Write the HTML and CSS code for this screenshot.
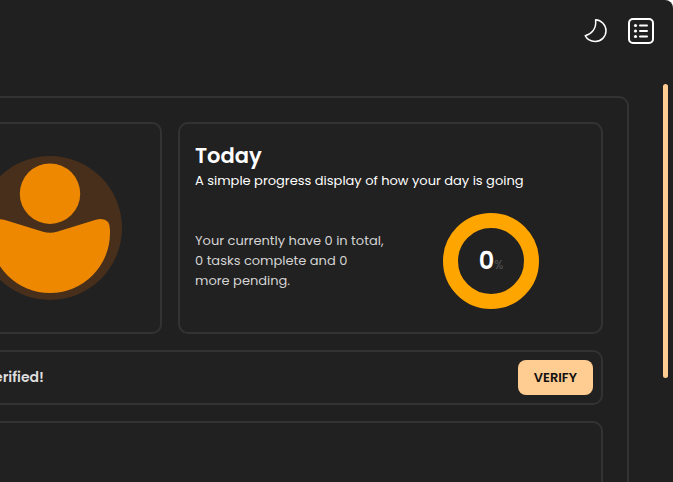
FILE: index.html
```html
<!DOCTYPE html>
<html lang="en">
<head>
    <meta charset="UTF-8">
    <meta name="viewport" content="width=device-width, initial-scale=1.0">
    <title>Dashboard</title>
    <link rel="stylesheet" href="styles.css">
</head>
<body>
    <div class="app">
        <header class="topbar">
            <button class="icon-btn" aria-label="Toggle theme">
                <svg width="26" height="26" viewBox="0 0 26 26" fill="none" stroke="#fff" stroke-width="1.5" stroke-linejoin="round">
                    <path d="M13.6 1.8C19.4 2.2 24 6.8 24 12.8C24 18.8 19.2 23.4 13.2 23.4C8.6 23.4 4.9 21.1 3.2 17.7C9.9 16 14.6 10.5 13.6 1.8Z"/>
                </svg>
            </button>
            <button class="icon-btn" aria-label="Open menu">
                <svg width="26" height="26" viewBox="0 0 26 26" fill="none" stroke="#fff" stroke-width="2" stroke-linecap="round">
                    <rect x="1" y="1" width="24" height="24" rx="4"/>
                    <path d="M12 7.5h7M12 13h7M12 18.5h7"/>
                    <g fill="#fff" stroke="none">
                        <circle cx="7.5" cy="7.5" r="1.6"/>
                        <circle cx="7.5" cy="13" r="1.6"/>
                        <circle cx="7.5" cy="18.5" r="1.6"/>
                    </g>
                </svg>
            </button>
        </header>

        <div class="content">
            <main class="panel">
                <div class="cards">
                    <section class="card profile">
                        <svg width="122" height="144" viewBox="22 0 122 144" role="img" aria-label="Profile picture">
                            <circle cx="72" cy="72" r="72" fill="#482f1b"/>
                            <circle cx="72" cy="37.7" r="30.2" fill="#ee8800"/>
                            <path fill="#ee8800" d="M65 75.8L27 64Q12 60 12 74V77A60 60 0 0 0 132 77V74Q132 60 117 64L79 75.8Q72 77.7 65 75.8Z"/>
                        </svg>
                    </section>

                    <section class="card today">
                        <h2>Today</h2>
                        <p class="subtitle">A simple progress display of how your day is going</p>
                        <div class="progress">
                            <p class="summary">Your currently have 0 in total,<br>0 tasks complete and 0<br>more pending.</p>
                            <div class="ring">
                                <span class="value">0</span><span class="percent">%</span>
                            </div>
                        </div>
                    </section>
                </div>

                <section class="card notice">
                    <p class="notice-text">erified!</p>
                    <button class="verify-btn">VERIFY</button>
                </section>

                <section class="card tasks"></section>
            </main>
            <div class="scroll-thumb"></div>
        </div>
    </div>
</body>
</html>
```
FILE: styles.css
```css
* {
    margin: 0;
    padding: 0;
    box-sizing: border-box;
    font-family: Poppins, Inter, sans-serif;
}

html {
    background-color: #ffffff;
}

body {
    height: 100vh;
    overflow: hidden;
}

.app {
    display: flex;
    flex-direction: column;
    height: 100vh;
    background-color: #202020;
    color: #ffffff;
    border-top-right-radius: 8px;
}

.topbar {
    display: flex;
    justify-content: flex-end;
    gap: 20px;
    padding: 18px 19px 40px;
}

.icon-btn {
    display: flex;
    background: none;
    border: none;
    cursor: pointer;
}

.content {
    display: flex;
    flex: 1;
    min-height: 0;
    padding-right: 5px;
}

.panel {
    display: flex;
    flex-direction: column;
    flex: 1;
    gap: 16px;
    min-width: 0;
    margin: 12px 34px 0 0;
    padding: 24px 24px 0 0;
    background-color: #202020;
    border: 2px solid #333333;
    border-width: 2px 2px 0 0;
    border-top-right-radius: 10px;
}

.cards {
    display: flex;
    gap: 16px;
}

.card {
    background-color: #212121;
    border: 2px solid #333333;
    border-radius: 10px;
}

/* these run off the left side of the window */
.profile,
.notice,
.tasks {
    border-left: none;
    border-top-left-radius: 0;
    border-bottom-left-radius: 0;
}

.profile {
    display: flex;
    align-items: center;
    padding-right: 38px;
}

.today {
    flex: 1;
    padding: 16px 14px 23px 15px;
}

.today h2 {
    font-size: 21px;
    font-weight: 600;
    line-height: 32px;
}

.subtitle {
    font-size: 13px;
    font-weight: 400;
    line-height: 18px;
    color: #ffffff;
    white-space: nowrap;
}

.progress {
    display: grid;
    grid-template-columns: 1fr 1fr;
    gap: 8px;
    align-items: center;
    margin-top: 23px;
}

.summary {
    font-size: 13px;
    line-height: 20px;
    color: #d4d4d4;
    white-space: nowrap;
}

.ring {
    display: flex;
    justify-content: center;
    align-items: baseline;
    justify-self: center;
    width: 96px;
    height: 96px;
    border: 15px solid #ffa500;
    border-radius: 50%;
    line-height: 66px;
}

.value {
    font-size: 24px;
    font-weight: 600;
}

.percent {
    font-size: 12px;
    color: #555555;
}

.notice {
    display: flex;
    justify-content: space-between;
    align-items: center;
    padding: 8px 8px 8px 0;
}

.notice-text {
    display: flex;
    justify-content: flex-end;
    width: 44px;
    white-space: nowrap;
    font-size: 14px;
    font-weight: 600;
    color: #dddddd;
}

.verify-btn {
    height: 35px;
    padding: 0 16px;
    background-color: #ffcc91;
    color: #111111;
    border: none;
    border-radius: 8px;
    font-size: 13px;
    font-weight: 600;
    cursor: pointer;
}

.tasks {
    flex: 1;
    border-bottom: none;
    border-bottom-right-radius: 0;
}

.scroll-thumb {
    width: 5px;
    height: 294px;
    background-color: #ffcc91;
    border-radius: 3px;
}
```
